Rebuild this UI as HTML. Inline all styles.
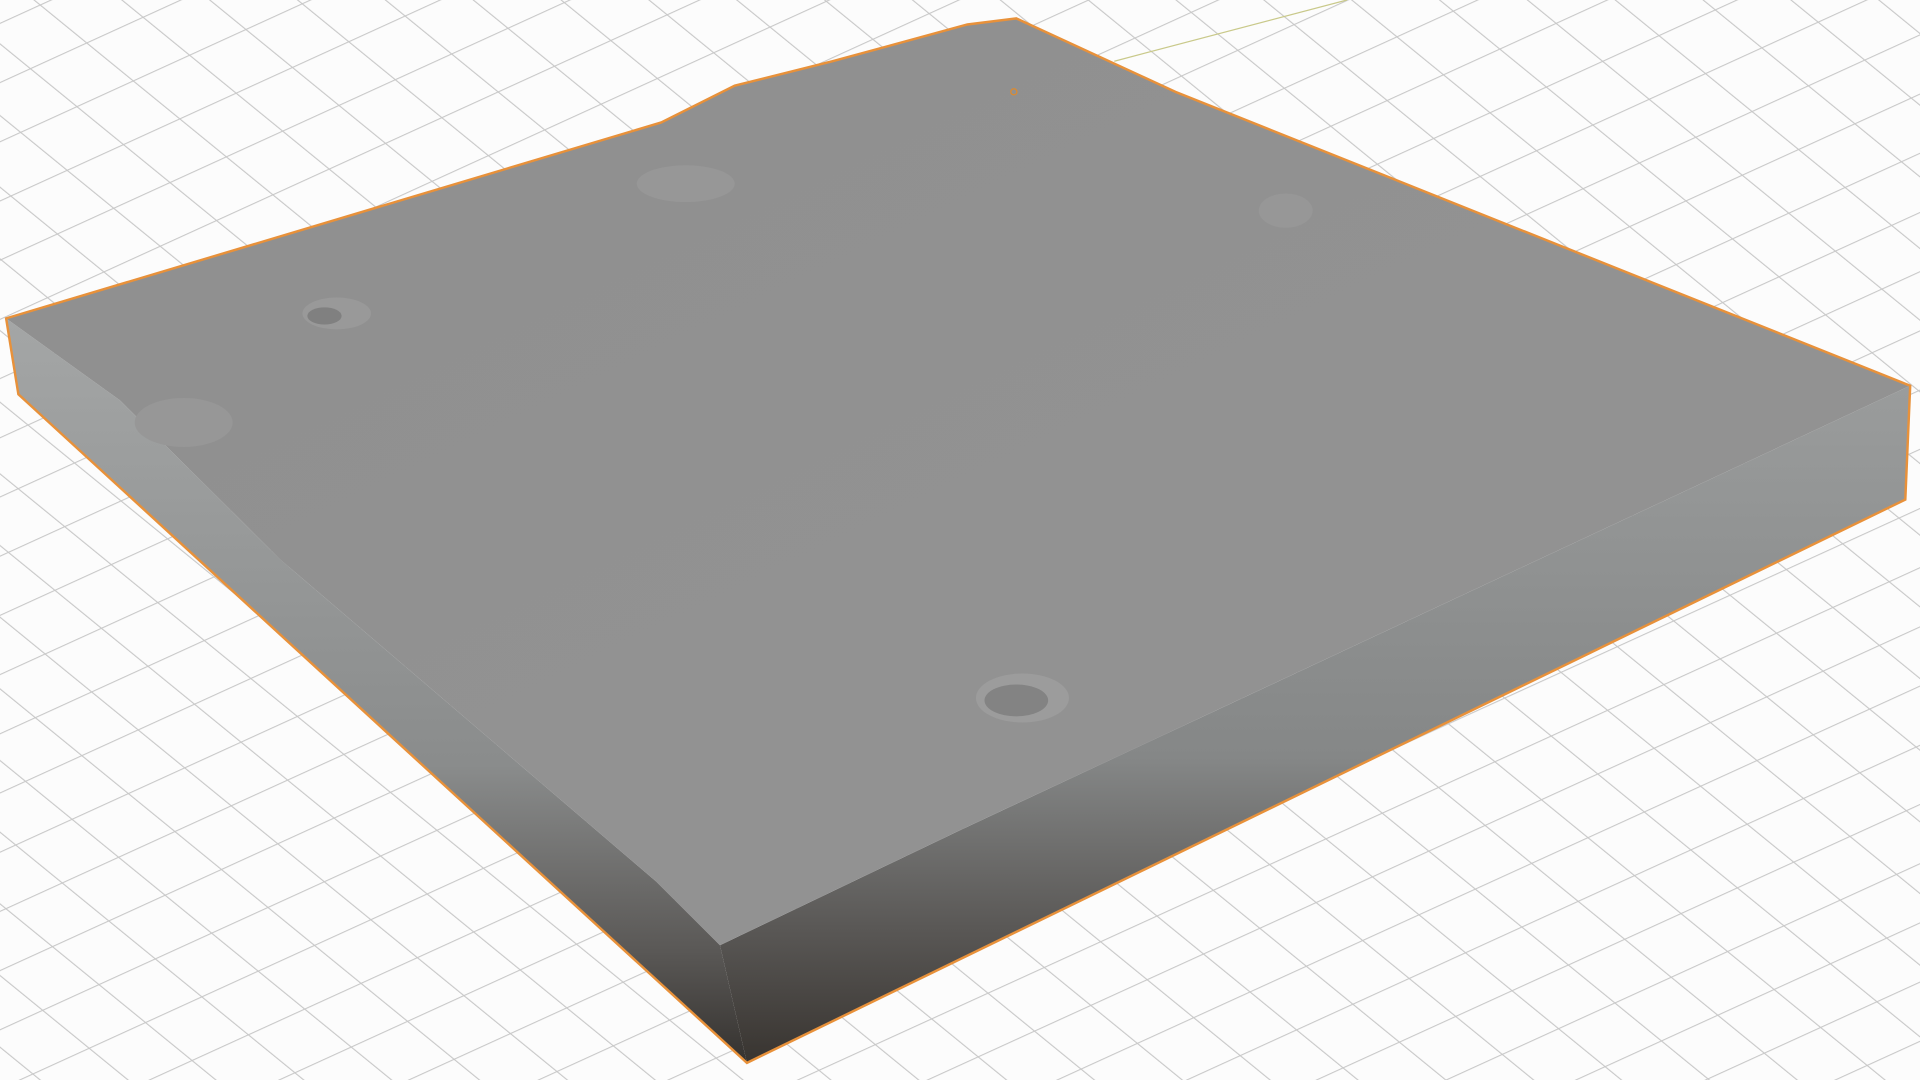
<!DOCTYPE html>
<html><head><meta charset="utf-8"><style>
html,body{margin:0;padding:0;width:1920px;height:1080px;overflow:hidden;background:#fff}
svg{display:block}
</style></head><body>
<svg width="1920" height="1080" viewBox="0 0 1568 882" preserveAspectRatio="none">
<defs>
<pattern id="g" patternUnits="userSpaceOnUse" width="1" height="1" patternTransform="matrix(38 31 46 -21 600 760)">
<rect width="1" height="1" fill="#fcfcfc"/>
<path d="M0 0H1M0 0V1" stroke="#c8c8c8" stroke-width="0.04" fill="none"/>
</pattern>
<linearGradient id="sl" x1="0" y1="0" x2="0" y2="1">
<stop offset="0" stop-color="#a4a6a6"/><stop offset="0.6" stop-color="#8a8c8c"/><stop offset="0.85" stop-color="#5a5856"/><stop offset="1" stop-color="#35322f"/>
</linearGradient>
<linearGradient id="sr" x1="0" y1="0" x2="0" y2="1">
<stop offset="0" stop-color="#9a9c9c"/><stop offset="0.55" stop-color="#858787"/><stop offset="0.8" stop-color="#5a5856"/><stop offset="1" stop-color="#383430"/>
</linearGradient>
<linearGradient id="top" x1="0" y1="0" x2="1" y2="1">
<stop offset="0" stop-color="#8f8f8f"/><stop offset="1" stop-color="#949494"/>
</linearGradient>
</defs>
<rect width="1568" height="882" fill="url(#g)"/>
<line x1="910" y1="50" x2="1100" y2="0" stroke="#c9c98a" stroke-width="1"/>
<polygon points="5,260 98,327 229,457 536,720 588,772 610,868 15,322" fill="url(#sl)"/>
<polygon points="588,772 784,678 1560,315 1556,408 610,868" fill="url(#sr)"/>
<polygon points="5,260 540,100 600,70 680,50 790,20 830,15 960,75 1560,315 784,678 588,772 536,720 229,457 98,327" fill="url(#top)"/>
<ellipse cx="835" cy="570" rx="38" ry="20" fill="#9c9c9c"/>
<ellipse cx="830" cy="572" rx="26" ry="13" fill="#838383"/>
<ellipse cx="275" cy="256" rx="28" ry="13" fill="#999"/>
<ellipse cx="265" cy="258" rx="14" ry="7" fill="#808080"/>
<ellipse cx="560" cy="150" rx="40" ry="15" fill="#979797"/>
<ellipse cx="1050" cy="172" rx="22" ry="14" fill="#979797"/>
<ellipse cx="150" cy="345" rx="40" ry="20" fill="#979797"/>
<polygon points="5,260 540,100 600,70 680,50 790,20 830,15 960,75 1560,315 1556,408 610,868 15,322" fill="none" stroke="#e8913a" stroke-width="2"/>
<circle cx="828" cy="75" r="2.5" fill="none" stroke="#e08a2a" stroke-width="1"/>
</svg>
</body></html>
